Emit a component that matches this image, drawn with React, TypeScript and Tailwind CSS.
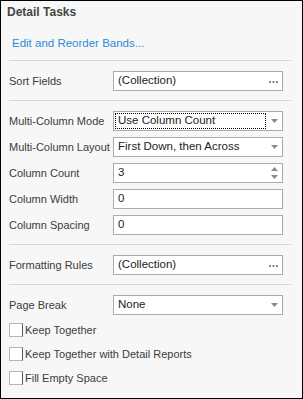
import type { ReactNode } from 'react'

const font = { fontFamily: '"Liberation Sans", Arial, sans-serif' }

function Sep() {
  return <div className="ml-[8px] mr-[11px] h-px bg-[#d9d9d9]" />
}

function Arrow() {
  return (
    <svg width="7" height="4" viewBox="0 0 7 4" className="shrink-0">
      <path d="M0 0h7L3.5 4z" fill="#8a8a8a" />
    </svg>
  )
}

function Dots() {
  return (
    <svg width="9" height="3" viewBox="0 0 9 3" className="shrink-0">
      <rect x="0" y="1" width="2" height="2" fill="#8a8a8a" />
      <rect x="3.5" y="1" width="2" height="2" fill="#8a8a8a" />
      <rect x="7" y="1" width="2" height="2" fill="#8a8a8a" />
    </svg>
  )
}

function Spin() {
  return (
    <div className="flex shrink-0 flex-col gap-[4px]">
      <svg width="7" height="4" viewBox="0 0 7 4">
        <path d="M0 4h7L3.5 0z" fill="#8a8a8a" />
      </svg>
      <svg width="7" height="4" viewBox="0 0 7 4">
        <path d="M0 0h7L3.5 4z" fill="#8a8a8a" />
      </svg>
    </div>
  )
}

function Row({ label, children, first }: { label: string; children: ReactNode; first?: boolean }) {
  return (
    <div className={`flex h-[20px] items-center ${first ? '' : 'mt-[6px]'}`}>
      <div className="w-[112px] whitespace-nowrap pl-[8px] text-[11px] text-[#3c3c3c]">{label}</div>
      {children}
    </div>
  )
}

function Field({ value, icon, focus }: { value: string; icon?: ReactNode; focus?: boolean }) {
  return (
    <div className="flex h-[20px] w-[170px] items-center border border-[#ababab] bg-white pr-[4px]">
      <div className="flex h-full flex-1 items-center p-[1px]">
        <div
          className={`flex h-full items-center pl-[2px] text-[11.5px] text-[#222] ${
            focus ? 'w-[151px] border border-dotted border-black' : 'pl-[3px]'
          }`}
        >
          {value}
        </div>
      </div>
      {icon}
    </div>
  )
}

function Check({ label, first }: { label: string; first?: boolean }) {
  return (
    <div className={`flex items-center pl-[8px] ${first ? '' : 'mt-[10px]'}`}>
      <div className="h-[14px] w-[14px] border border-[#b4b4b4] border-r-[#5a5a5a] bg-white" />
      <span className="ml-[2px] text-[11px] leading-[14px] text-[#3c3c3c]">{label}</span>
    </div>
  )
}

export default function App() {
  return (
    <div className="h-[399px] w-[303px] border border-black bg-[#f7f7f7]" style={font}>
      <div className="flex h-[22px] items-center pl-[6px] text-[12px] font-bold text-[#444]">Detail Tasks</div>
      <div className="h-[37px] pl-[11px] pt-[12px] text-[11.5px] leading-[16px] text-[#2e8ad8]">Edit and Reorder Bands...</div>
      <Sep />
      <div className="mb-[9px] mt-[10px]">
        <Row label="Sort Fields" first>
          <Field value="(Collection)" icon={<Dots />} />
        </Row>
      </div>
      <Sep />
      <div className="mb-[9px] mt-[10px]">
        <Row label="Multi-Column Mode" first>
          <Field value="Use Column Count" icon={<Arrow />} focus />
        </Row>
        <Row label="Multi-Column Layout">
          <Field value="First Down, then Across" icon={<Arrow />} />
        </Row>
        <Row label="Column Count">
          <Field value="3" icon={<Spin />} />
        </Row>
        <Row label="Column Width">
          <Field value="0" />
        </Row>
        <Row label="Column Spacing">
          <Field value="0" />
        </Row>
      </div>
      <Sep />
      <div className="mb-[9px] mt-[10px]">
        <Row label="Formatting Rules" first>
          <Field value="(Collection)" icon={<Dots />} />
        </Row>
      </div>
      <Sep />
      <div className="mt-[10px]">
        <Row label="Page Break" first>
          <Field value="None" icon={<Arrow />} />
        </Row>
      </div>
      <div className="mt-[8px]">
        <Check label="Keep Together" first />
        <Check label="Keep Together with Detail Reports" />
        <Check label="Fill Empty Space" />
      </div>
    </div>
  )
}
